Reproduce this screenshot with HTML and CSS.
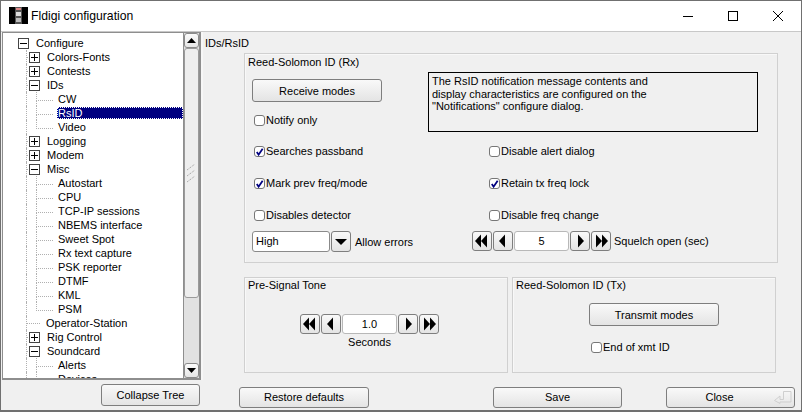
FILE: index.html
```html
<!DOCTYPE html>
<html lang="en">
<head>
<meta charset="utf-8">
<title>Fldigi configuration</title>
<link rel="stylesheet" href="styles.css">
</head>
<body>
<svg class="defs" width="0" height="0" aria-hidden="true">
  <symbol id="i-prev" viewBox="0 0 20 20"><polygon points="6,10 12,3.5 12,16.5"/></symbol>
  <symbol id="i-next" viewBox="0 0 20 20"><polygon points="14,10 8,3.5 8,16.5"/></symbol>
  <symbol id="i-first" viewBox="0 0 20 20"><polygon points="3,10 9,3.5 9,16.5"/><polygon points="9,10 15,3.5 15,16.5"/></symbol>
  <symbol id="i-last" viewBox="0 0 20 20"><polygon points="17,10 11,3.5 11,16.5"/><polygon points="11,10 5,3.5 5,16.5"/></symbol>
  <symbol id="i-check" viewBox="0 0 10 10"><path d="M2 5 L4 8 L8.5 1.5" fill="none" stroke="#000080" stroke-width="2"/></symbol>
</svg>
<div class="window">
  <header class="titlebar">
    <svg class="appicon" width="19" height="17" viewBox="0 0 19 17">
      <rect width="19" height="17" fill="#000"/>
      <rect x="6" y="0" width="7" height="17" fill="#555"/>
      <rect x="7" y="1" width="5" height="2" fill="#d88"/>
      <rect x="7" y="5" width="5" height="4" fill="#ddd"/>
      <rect x="7" y="11" width="5" height="4" fill="#bbb"/>
    </svg>
    <span class="title">Fldigi configuration</span>
    <div class="winbtns">
      <svg width="10" height="10" viewBox="0 0 10 10"><path d="M0 5.5H10" stroke="#000"/></svg>
      <svg width="10" height="10" viewBox="0 0 10 10"><rect x=".5" y=".5" width="9" height="9" fill="none" stroke="#000"/></svg>
      <svg width="10" height="10" viewBox="0 0 10 10"><path d="M0 0L10 10M10 0L0 10" stroke="#000" stroke-width="1"/></svg>
    </div>
  </header>

  <main class="main">
    <nav class="tree">
      <div class="tree-rows">
        <div class="row l0"><i class="box minus"></i><span>Configure</span></div>
        <div class="row l1 g1"><i class="box plus"></i><span>Colors-Fonts</span></div>
        <div class="row l1 g1"><i class="box plus"></i><span>Contests</span></div>
        <div class="row l1 g1"><i class="box minus"></i><span>IDs</span></div>
        <div class="row l2 g1 g2"><span>CW</span></div>
        <div class="row l2 g1 g2 selected"><span>RsID</span></div>
        <div class="row l2 g1 g2 end"><span>Video</span></div>
        <div class="row l1 g1"><i class="box plus"></i><span>Logging</span></div>
        <div class="row l1 g1"><i class="box plus"></i><span>Modem</span></div>
        <div class="row l1 g1"><i class="box minus"></i><span>Misc</span></div>
        <div class="row l2 g1 g2"><span>Autostart</span></div>
        <div class="row l2 g1 g2"><span>CPU</span></div>
        <div class="row l2 g1 g2"><span>TCP-IP sessions</span></div>
        <div class="row l2 g1 g2"><span>NBEMS interface</span></div>
        <div class="row l2 g1 g2"><span>Sweet Spot</span></div>
        <div class="row l2 g1 g2"><span>Rx text capture</span></div>
        <div class="row l2 g1 g2"><span>PSK reporter</span></div>
        <div class="row l2 g1 g2"><span>DTMF</span></div>
        <div class="row l2 g1 g2"><span>KML</span></div>
        <div class="row l2 g1 g2 end"><span>PSM</span></div>
        <div class="row l1 g1 leaf"><span>Operator-Station</span></div>
        <div class="row l1 g1"><i class="box plus"></i><span>Rig Control</span></div>
        <div class="row l1 g1"><i class="box minus"></i><span>Soundcard</span></div>
        <div class="row l2 g1 g2"><span>Alerts</span></div>
        <div class="row l2 g1 g2"><span>Devices</span></div>
      </div>
      <div class="scrollbar">
        <div class="sb-btn"><svg width="9" height="5" viewBox="0 0 9 5"><polygon points="4.5,0 9,5 0,5"/></svg></div>
        <div class="sb-thumb">
          <svg width="10" height="19" viewBox="0 0 10 19"><path d="M0 6L8 0M0 12L8 6M0 18L8 12" stroke="#999" stroke-dasharray="1 1" fill="none"/></svg>
        </div>
        <div class="sb-track"></div>
        <div class="sb-btn"><svg width="9" height="5" viewBox="0 0 9 5"><polygon points="0,0 9,0 4.5,5"/></svg></div>
      </div>
    </nav>

    <section class="panel">
      <div class="panel-title">IDs/RsID</div>
      <div class="group rx">
        <div class="group-title">Reed-Solomon ID (Rx)</div>
        <div class="rx-top">
          <div class="rx-left">
            <button class="btn wide">Receive modes</button>
            <label class="check notify"><i class="cb"></i>Notify only</label>
          </div>
          <p class="note">The RsID notification message contents and<br>display characteristics are configured on the<br>"Notifications" configure dialog.</p>
        </div>
        <div class="checks">
          <label class="check"><i class="cb"><svg width="10" height="10"><use href="#i-check"/></svg></i>Searches passband</label>
          <label class="check"><i class="cb"></i>Disable alert dialog</label>
          <label class="check"><i class="cb"><svg width="10" height="10"><use href="#i-check"/></svg></i>Mark prev freq/mode</label>
          <label class="check"><i class="cb"><svg width="10" height="10"><use href="#i-check"/></svg></i>Retain tx freq lock</label>
          <label class="check"><i class="cb"></i>Disables detector</label>
          <label class="check"><i class="cb"></i>Disable freq change</label>
        </div>
        <div class="rx-bottom">
          <div class="choice">
            <span class="choice-value">High</span>
            <span class="cbtn choice-btn"><svg width="12" height="6" viewBox="0 0 12 6"><polygon points="0,0 12,0 6,6"/></svg></span>
            <span class="side-label">Allow errors</span>
          </div>
          <div class="counter">
            <span class="cbtn"><svg width="20" height="20"><use href="#i-first"/></svg></span>
            <span class="cbtn"><svg width="20" height="20"><use href="#i-prev"/></svg></span>
            <span class="cvalue">5</span>
            <span class="cbtn"><svg width="20" height="20"><use href="#i-next"/></svg></span>
            <span class="cbtn"><svg width="20" height="20"><use href="#i-last"/></svg></span>
            <span class="side-label">Squelch open (sec)</span>
          </div>
        </div>
      </div>
      <div class="lower">
        <div class="group tone">
          <div class="group-title">Pre-Signal Tone</div>
          <div class="counter centered">
            <span class="cbtn"><svg width="20" height="20"><use href="#i-first"/></svg></span>
            <span class="cbtn"><svg width="20" height="20"><use href="#i-prev"/></svg></span>
            <span class="cvalue">1.0</span>
            <span class="cbtn"><svg width="20" height="20"><use href="#i-next"/></svg></span>
            <span class="cbtn"><svg width="20" height="20"><use href="#i-last"/></svg></span>
          </div>
          <div class="under-label">Seconds</div>
        </div>
        <div class="group tx">
          <div class="group-title">Reed-Solomon ID (Tx)</div>
          <button class="btn wide tx-btn">Transmit modes</button>
          <label class="check eot"><i class="cb"></i>End of xmt ID</label>
        </div>
      </div>
    </section>
  </main>

  <footer class="footer">
    <button class="btn f-collapse">Collapse Tree</button>
    <button class="btn f-restore">Restore defaults</button>
    <button class="btn f-save">Save</button>
    <button class="btn f-close">Close
      <svg class="enter" width="18" height="13" viewBox="0 0 18 13"><path d="M17 .5H9.5V8.5H6V5L.5 9.5L6 12.5V11H17Z" fill="none" stroke="#cfcfcf"/></svg>
    </button>
  </footer>
</div>
</body>
</html>
```

FILE: styles.css
```css
* { box-sizing: border-box; }
html, body { margin: 0; padding: 0; }
body { width: 802px; height: 412px; overflow: hidden; font: 11px/14px "Liberation Sans", Arial, sans-serif; color: #000; background: #f0f0f0; }
.defs { position: absolute; }

.window { width: 802px; height: 412px; display: flex; flex-direction: column; background: #f0f0f0; border: 1px solid #707070; border-width: 1px 1px 2px 1px; }

.titlebar { height: 30px; flex: none; display: flex; align-items: center; padding-left: 8px; background: #fff; }
.appicon { flex: none; margin-top: -1px; }
.title { margin-left: 3px; font-size: 12.2px; color: #000; }
.winbtns { margin-left: auto; display: flex; gap: 35px; padding-right: 18px; margin-top: -1px; }

.main { flex: none; height: 349px; display: flex; border-top: 1px solid #c8c8c8; }

.tree { width: 199px; margin-left: 1px; flex: none; display: flex; background: #fff; border: 1px solid #8e8e8e; border-width: 1px 2px 2px 1px; overflow: hidden; }
.tree-rows { width: 180px; flex: none; padding-top: 3px; overflow: hidden; }
.row { position: relative; height: 14px; display: flex; align-items: center; white-space: nowrap; }
.row.l0 { padding-left: 15px; }
.row.l0 span { margin-left: 7px; }
.row.l1 { padding-left: 26px; }
.row.l1 span { margin-left: 7px; }
.row.l1.leaf { padding-left: 43px; }
.row.l1.leaf span { margin-left: 0; }
.row.l2 { padding-left: 55px; }
.row.g1::before { content: ""; position: absolute; left: 23px; top: 0; height: 14px; border-left: 1px dotted #b0b0b0; }
.row.l1::after { content: ""; position: absolute; left: 24px; width: 3px; top: 7px; border-top: 1px dotted #b0b0b0; }
.row.l1.leaf::after { width: 13px; }
.row.l2::after { content: ""; position: absolute; left: 33px; width: 16px; top: 0; height: 8px; border-left: 1px dotted #b0b0b0; border-bottom: 1px dotted #b0b0b0; }
.row.l2:not(.end) > span::before { content: ""; position: absolute; left: 33px; top: 8px; height: 6px; border-left: 1px dotted #b0b0b0; }
.row.selected { padding-left: 54px; }
.row.selected span { flex: 1; height: 12px; line-height: 12px; padding-left: 1px; background: #000080; color: #fff; outline: 1px dotted #fff; outline-offset: -1px; }

.box { position: relative; z-index: 1; flex: none; width: 11px; height: 11px; border: 1px solid #444; background: #fff; }
.box::before { content: ""; position: absolute; left: 1px; top: 4px; width: 7px; height: 1px; background: #000; }
.box.plus::after { content: ""; position: absolute; left: 4px; top: 1px; width: 1px; height: 7px; background: #000; }

.scrollbar { width: 16px; flex: none; display: flex; flex-direction: column; background: #e1e1e1; border-left: 1px solid #8e8e8e; }
.sb-btn { height: 15px; flex: none; display: flex; align-items: center; justify-content: center; border: 1px solid #8a8a8a; border-radius: 3px; background: linear-gradient(#fbfbfb, #e6e6e6); }
.sb-thumb { height: 250px; flex: none; display: flex; align-items: center; justify-content: center; border: 1px solid #9a9a9a; border-radius: 3px; background: #eeeeee; }
.sb-track { flex: 1; }

.panel { flex: 1; padding: 0 0 0 2px; min-width: 0; border-left: 2px solid #f7f7f7; }
.panel-title { height: 21px; line-height: 14px; display: flex; align-items: center; }

.group { border: 1px solid #d0d0d0; box-shadow: inset 1px 1px 0 #f8f8f8; }
.group-title { height: 18px; line-height: 17px; padding-left: 3px; }
.lower .group-title { line-height: 15px; }
.rx { margin-left: 39px; width: 534px; height: 210px; }
.rx-top { display: flex; height: 61px; padding-left: 7px; }
.rx-left { width: 176px; flex: none; padding-top: 7px; }
.btn { display: block; padding: 0; font: inherit; color: #000; border: 1px solid #7e7e7e; border-radius: 3px; background: linear-gradient(#f9f9f9, #e4e4e4); text-align: center; }
.btn.wide { width: 130px; height: 23px; }
.check { display: flex; align-items: center; height: 14px; padding-left: 2px; white-space: nowrap; }
.cb { flex: none; width: 11px; height: 11px; margin-right: 1px; border: 1px solid #777; border-radius: 3px; background: #fff; display: flex; }
.notify { margin-top: 11px; }
.note { margin: 0; width: 330px; height: 60px; border: 1px solid #000; padding: 2px 3px; line-height: 12.5px; }
.checks { display: grid; grid-template-columns: 235px 1fr; row-gap: 18px; margin-top: 11px; padding-left: 7px; }
.rx-bottom { display: flex; margin-top: 9px; padding-left: 7px; }
.choice { width: 220px; flex: none; display: flex; align-items: center; height: 21px; }
.choice-value { width: 78px; height: 21px; line-height: 19px; padding-left: 3px; background: #fff; border: 1px solid #8a8a8a; border-radius: 3px; }
.cbtn { flex: none; width: 20px; height: 20px; display: flex; align-items: center; justify-content: center; border: 1px solid #7e7e7e; border-radius: 3px; background: linear-gradient(#f9f9f9, #e4e4e4); }
.cbtn svg { flex: none; }
.choice-btn { height: 21px; margin-left: 1px; }
.side-label { margin-left: 4px; white-space: nowrap; }
.counter { display: flex; align-items: center; gap: 1px; height: 20px; }
.cvalue { width: 55px; height: 20px; line-height: 18px; text-align: center; background: #fff; border: 1px solid #b8b8b8; border-radius: 3px; }
.counter .side-label { margin-left: 2px; }

.lower { display: flex; margin: 14px 0 0 39px; gap: 4px; }
.tone { width: 264px; height: 96px; }
.tx { width: 264px; height: 96px; }
.centered { justify-content: center; margin-top: 18px; padding-right: 13px; }
.under-label { text-align: center; margin-top: 1px; padding-right: 13px; line-height: 14px; }
.tx-btn { margin: 7px 0 0 76px; }
.eot { margin: 14px 0 0 76px; }

.footer { flex: none; position: relative; display: flex; align-items: flex-start; padding: 4px 0 0 100px; }
.f-collapse { width: 99px; height: 22px; }
.f-restore { width: 130px; height: 21px; margin-left: 39px; margin-top: 3px; padding-bottom: 1px; }
.f-save { width: 129px; height: 21px; margin-left: 124px; margin-top: 3px; padding-bottom: 1px; }
.f-close { position: relative; width: 129px; height: 21px; margin-left: 44px; margin-top: 3px; padding: 0 22px 1px 0; }
.enter { position: absolute; right: 2px; top: 3px; }
```
